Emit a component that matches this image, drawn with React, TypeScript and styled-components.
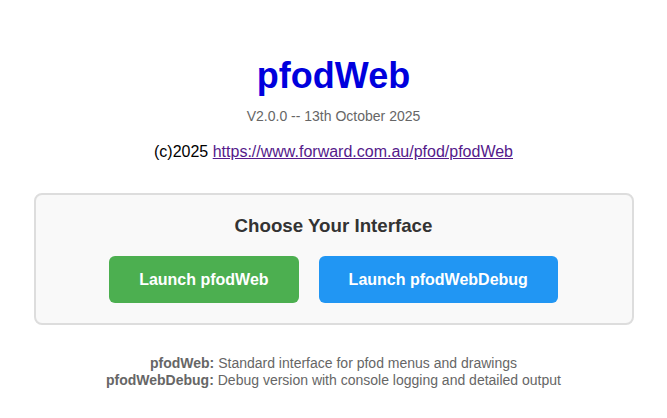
import React from 'react';
import { styled, createGlobalStyle } from 'styled-components';

const GlobalStyle = createGlobalStyle`
  html, body {
    margin: 0;
    padding: 0;
    background: #fff;
  }
  body {
    font-family: 'Liberation Sans', Arial, sans-serif;
  }
`;

const interfaces = [
  { name: 'pfodWeb', color: '#4caf50', note: 'Standard interface for pfod menus and drawings' },
  {
    name: 'pfodWebDebug',
    color: '#2196f3',
    note: 'Debug version with console logging and detailed output',
  },
];

const App = () => {
  return (
    <>
      <GlobalStyle />
      <Page>
        <Title>pfodWeb</Title>
        <Version>V2.0.0 -- 13th October 2025</Version>
        <Copyright>
          (c)2025 <a href="#">https://www.forward.com.au/pfod/pfodWeb</a>
        </Copyright>
        <ChooserBox>
          <BoxHeading>Choose Your Interface</BoxHeading>
          <ButtonRow>
            {interfaces.map((item) => (
              <LaunchButton key={item.name} $bg={item.color}>
                Launch {item.name}
              </LaunchButton>
            ))}
          </ButtonRow>
        </ChooserBox>
        <Notes>
          {interfaces.map((item) => (
            <div key={item.name}>
              <strong>{item.name}:</strong> {item.note}
            </div>
          ))}
        </Notes>
      </Page>
    </>
  );
};

const Page = styled.div`
  max-width: 600px;
  margin: 0 auto;
  padding-top: 55px;
  text-align: center;
`;

const Title = styled.h1`
  margin: 0 0 11px;
  font-size: 36px;
  font-weight: 700;
  color: #0000dd;
`;

const Version = styled.div`
  font-size: 14px;
  color: #666;
  margin-bottom: 19px;
`;

const Copyright = styled.div`
  font-size: 16px;
  color: #000;
  margin-bottom: 32px;

  a {
    color: #551a8b;
    text-decoration: underline;
  }
`;

const ChooserBox = styled.div`
  border: 2px solid #ddd;
  border-radius: 8px;
  background-color: #f9f9f9;
  padding: 20px;
`;

const BoxHeading = styled.h3`
  margin: 0 0 19px;
  font-size: 18.72px;
  font-weight: 700;
  color: #333;
`;

const ButtonRow = styled.div`
  display: flex;
  justify-content: center;
  gap: 20px;
`;

const LaunchButton = styled.button<{ $bg: string }>`
  border: none;
  border-radius: 6px;
  padding: 15px 30px;
  font-family: inherit;
  font-size: 16px;
  font-weight: 700;
  line-height: 17px;
  color: #fff;
  background-color: ${(p) => p.$bg};
  cursor: pointer;
`;

const Notes = styled.div`
  margin-top: 30px;
  font-size: 14px;
  line-height: 17px;
  color: #666;
`;

export default App;
